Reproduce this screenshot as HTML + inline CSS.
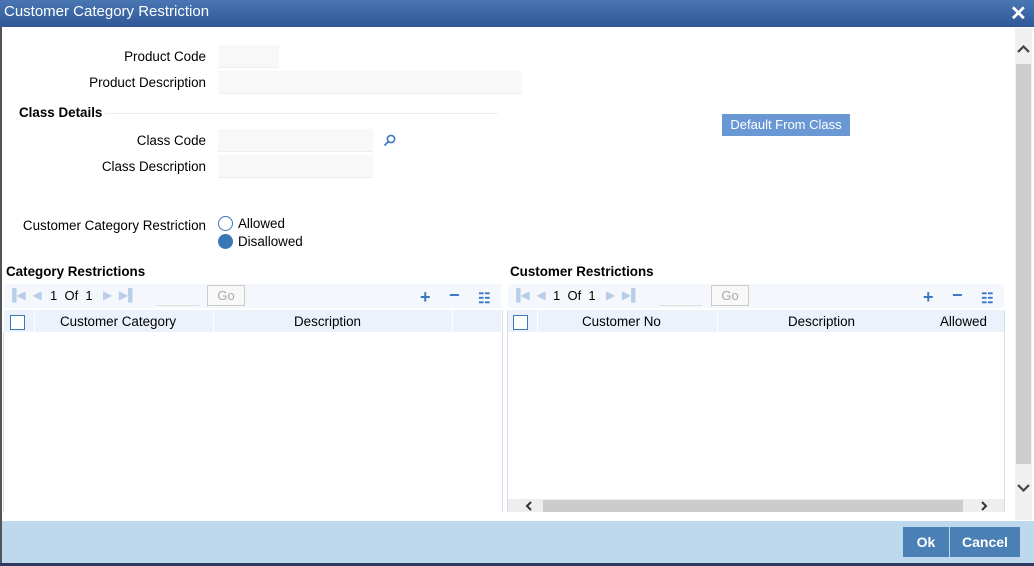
<!DOCTYPE html>
<html><head><meta charset="utf-8"><style>
*{margin:0;padding:0;box-sizing:border-box}
body{width:1034px;height:566px;position:relative;overflow:hidden;background:#fff;font-family:"Liberation Sans",Arial,sans-serif;font-size:13.4px;color:#000}
.a{position:absolute}
.lbl{position:absolute;text-align:right;width:206px;left:0}
.inp{position:absolute;background:#f8f8f8;border-bottom:1px solid #eee}
.b{font-weight:bold}
.tb{position:absolute;height:24px;background:#f4f8fd}
.hd{position:absolute;height:22px;background:#ebf2fb}
.cb{position:absolute;width:15px;height:15px;border:1px solid #3a77b5;background:#fff}
.nav{color:#b8cde8;font-size:12px}
.go{position:absolute;width:38px;height:21px;border:1px solid #ccc;color:#aaa;text-align:center;line-height:19px;font-size:13px;background:#f8f8f8}
.ic{position:absolute;color:#3b78c0;font-size:18px;font-weight:bold;line-height:18px}
</style></head><body>
<div class="a" style="left:0;top:0;width:1034px;height:27px;background:linear-gradient(#4a77b4,#2e5796);"></div>
<div class="a" style="left:4px;top:3px;color:#fff;font-size:15px">Customer Category Restriction</div>
<div class="a" style="left:1010px;top:1px;color:#fff;font-size:20px;font-weight:bold">✕</div>
<div class="a" style="left:0;top:27px;width:2px;height:539px;background:#555"></div>
<div class="a" style="left:0;top:563px;width:1034px;height:3px;background:#2d3b5e"></div>

<div class="lbl" style="top:49px">Product Code</div>
<div class="inp" style="left:218px;top:45px;width:61px;height:23px"></div>
<div class="lbl" style="top:75px">Product Description</div>
<div class="inp" style="left:218px;top:71px;width:304px;height:23px"></div>
<div class="a b" style="left:19px;top:105px">Class Details</div>
<div class="a" style="left:105px;top:113px;width:393px;height:1px;background:#eee"></div>
<div class="lbl" style="top:133px">Class Code</div>
<div class="inp" style="left:218px;top:129px;width:155px;height:23px"></div>
<svg class="a" style="left:383px;top:134px" width="13" height="13" viewBox="0 0 13 13"><circle cx="8" cy="5" r="3.6" fill="none" stroke="#3b78c0" stroke-width="1.6"/><line x1="5.5" y1="7.5" x2="1.5" y2="11.5" stroke="#3b78c0" stroke-width="1.8"/></svg>
<div class="lbl" style="top:159px">Class Description</div>
<div class="inp" style="left:218px;top:155px;width:155px;height:23px"></div>
<div class="a" style="left:722px;top:114px;width:128px;height:22px;background:#6a98d4;color:#fff;font-size:13px;text-align:center;line-height:22px">Default From Class</div>

<div class="lbl" style="top:218px">Customer Category Restriction</div>
<div class="a" style="left:218px;top:216px;width:15px;height:15px;border:1px solid #3a77b5;border-radius:50%"></div>
<div class="a" style="left:238px;top:216px">Allowed</div>
<div class="a" style="left:218px;top:234px;width:15px;height:15px;background:#3a77b5;border-radius:50%"></div>
<div class="a" style="left:238px;top:234px">Disallowed</div>

<div class="a b" style="left:6px;top:264px">Category Restrictions</div>
<div class="tb" style="left:4px;top:284px;width:497px"></div>
<div class="a nav" style="left:8px;top:288px">▐◀ &nbsp;◀</div>
<div class="a" style="left:50px;top:288px;font-size:13px">1 &nbsp;Of &nbsp;1</div>
<div class="a nav" style="left:103px;top:288px">▶ &nbsp;▶▌</div>
<div class="a" style="left:157px;top:305px;width:42px;height:1px;background:#ddd"></div>
<div class="go" style="left:207px;top:285px">Go</div>
<div class="ic" style="left:420px;top:288px">+</div>
<div class="ic" style="left:449px;top:286px">−</div>
<div class="ic" style="left:478px;top:289px;font-size:14px">☷</div>
<div class="hd" style="left:4px;top:310px;width:497px"></div>
<div class="cb" style="left:10px;top:315px"></div>
<div class="a" style="left:34px;top:310px;width:1px;height:22px;background:#fff"></div>
<div class="a" style="left:213px;top:310px;width:1px;height:22px;background:#fff"></div>
<div class="a" style="left:452px;top:310px;width:1px;height:22px;background:#fff"></div>
<div class="a" style="left:60px;top:314px">Customer Category</div>
<div class="a" style="left:294px;top:314px">Description</div>
<div class="a" style="left:3px;top:332px;width:1px;height:180px;background:#d5dde8"></div>
<div class="a" style="left:502px;top:310px;width:1px;height:202px;background:#d5dde8"></div>

<div class="a b" style="left:510px;top:264px">Customer Restrictions</div>
<div class="tb" style="left:508px;top:284px;width:496px"></div>
<div class="a nav" style="left:512px;top:288px">▐◀ &nbsp;◀</div>
<div class="a" style="left:553px;top:288px;font-size:13px">1 &nbsp;Of &nbsp;1</div>
<div class="a nav" style="left:606px;top:288px">▶ &nbsp;▶▌</div>
<div class="a" style="left:660px;top:305px;width:42px;height:1px;background:#ddd"></div>
<div class="go" style="left:711px;top:285px">Go</div>
<div class="ic" style="left:923px;top:288px">+</div>
<div class="ic" style="left:952px;top:286px">−</div>
<div class="ic" style="left:981px;top:289px;font-size:14px">☷</div>
<div class="hd" style="left:508px;top:310px;width:496px"></div>
<div class="cb" style="left:513px;top:315px"></div>
<div class="a" style="left:537px;top:310px;width:1px;height:22px;background:#fff"></div>
<div class="a" style="left:717px;top:310px;width:1px;height:22px;background:#fff"></div>
<div class="a" style="left:582px;top:314px">Customer No</div>
<div class="a" style="left:788px;top:314px">Description</div>
<div class="a" style="left:940px;top:314px">Allowed</div>
<div class="a" style="left:507px;top:310px;width:1px;height:202px;background:#d5dde8"></div>
<div class="a" style="left:1004px;top:310px;width:1px;height:202px;background:#d5dde8"></div>
<div class="a" style="left:508px;top:499px;width:496px;height:13px;background:#eee"></div>
<div class="a" style="left:543px;top:500px;width:420px;height:12px;background:#ccc"></div>
<svg class="a" style="left:525px;top:501px" width="8" height="10"><path d="M6 1L2 5L6 9" fill="none" stroke="#333" stroke-width="2"/></svg>
<svg class="a" style="left:980px;top:501px" width="8" height="10"><path d="M2 1L6 5L2 9" fill="none" stroke="#333" stroke-width="2"/></svg>

<div class="a" style="left:1015px;top:28px;width:17px;height:492px;background:#f0f0f0"></div>
<div class="a" style="left:1016px;top:64px;width:15px;height:400px;background:#cdcdcd"></div>
<svg class="a" style="left:1017px;top:44px" width="13" height="10"><path d="M1 8L6.5 2.5L12 8" fill="none" stroke="#444" stroke-width="2.2"/></svg>
<svg class="a" style="left:1017px;top:483px" width="13" height="10"><path d="M1 2L6.5 7.5L12 2" fill="none" stroke="#444" stroke-width="2.2"/></svg>

<div class="a" style="left:2px;top:521px;width:1032px;height:42px;background:#bed9ed"></div>
<div class="a" style="left:903px;top:527px;width:46px;height:30px;background:#4a80b5;color:#fff;font-weight:bold;text-align:center;line-height:30px;font-size:14px">Ok</div>
<div class="a" style="left:950px;top:527px;width:70px;height:30px;background:#4a80b5;color:#fff;font-weight:bold;text-align:center;line-height:30px;font-size:14px">Cancel</div>
</body></html>
